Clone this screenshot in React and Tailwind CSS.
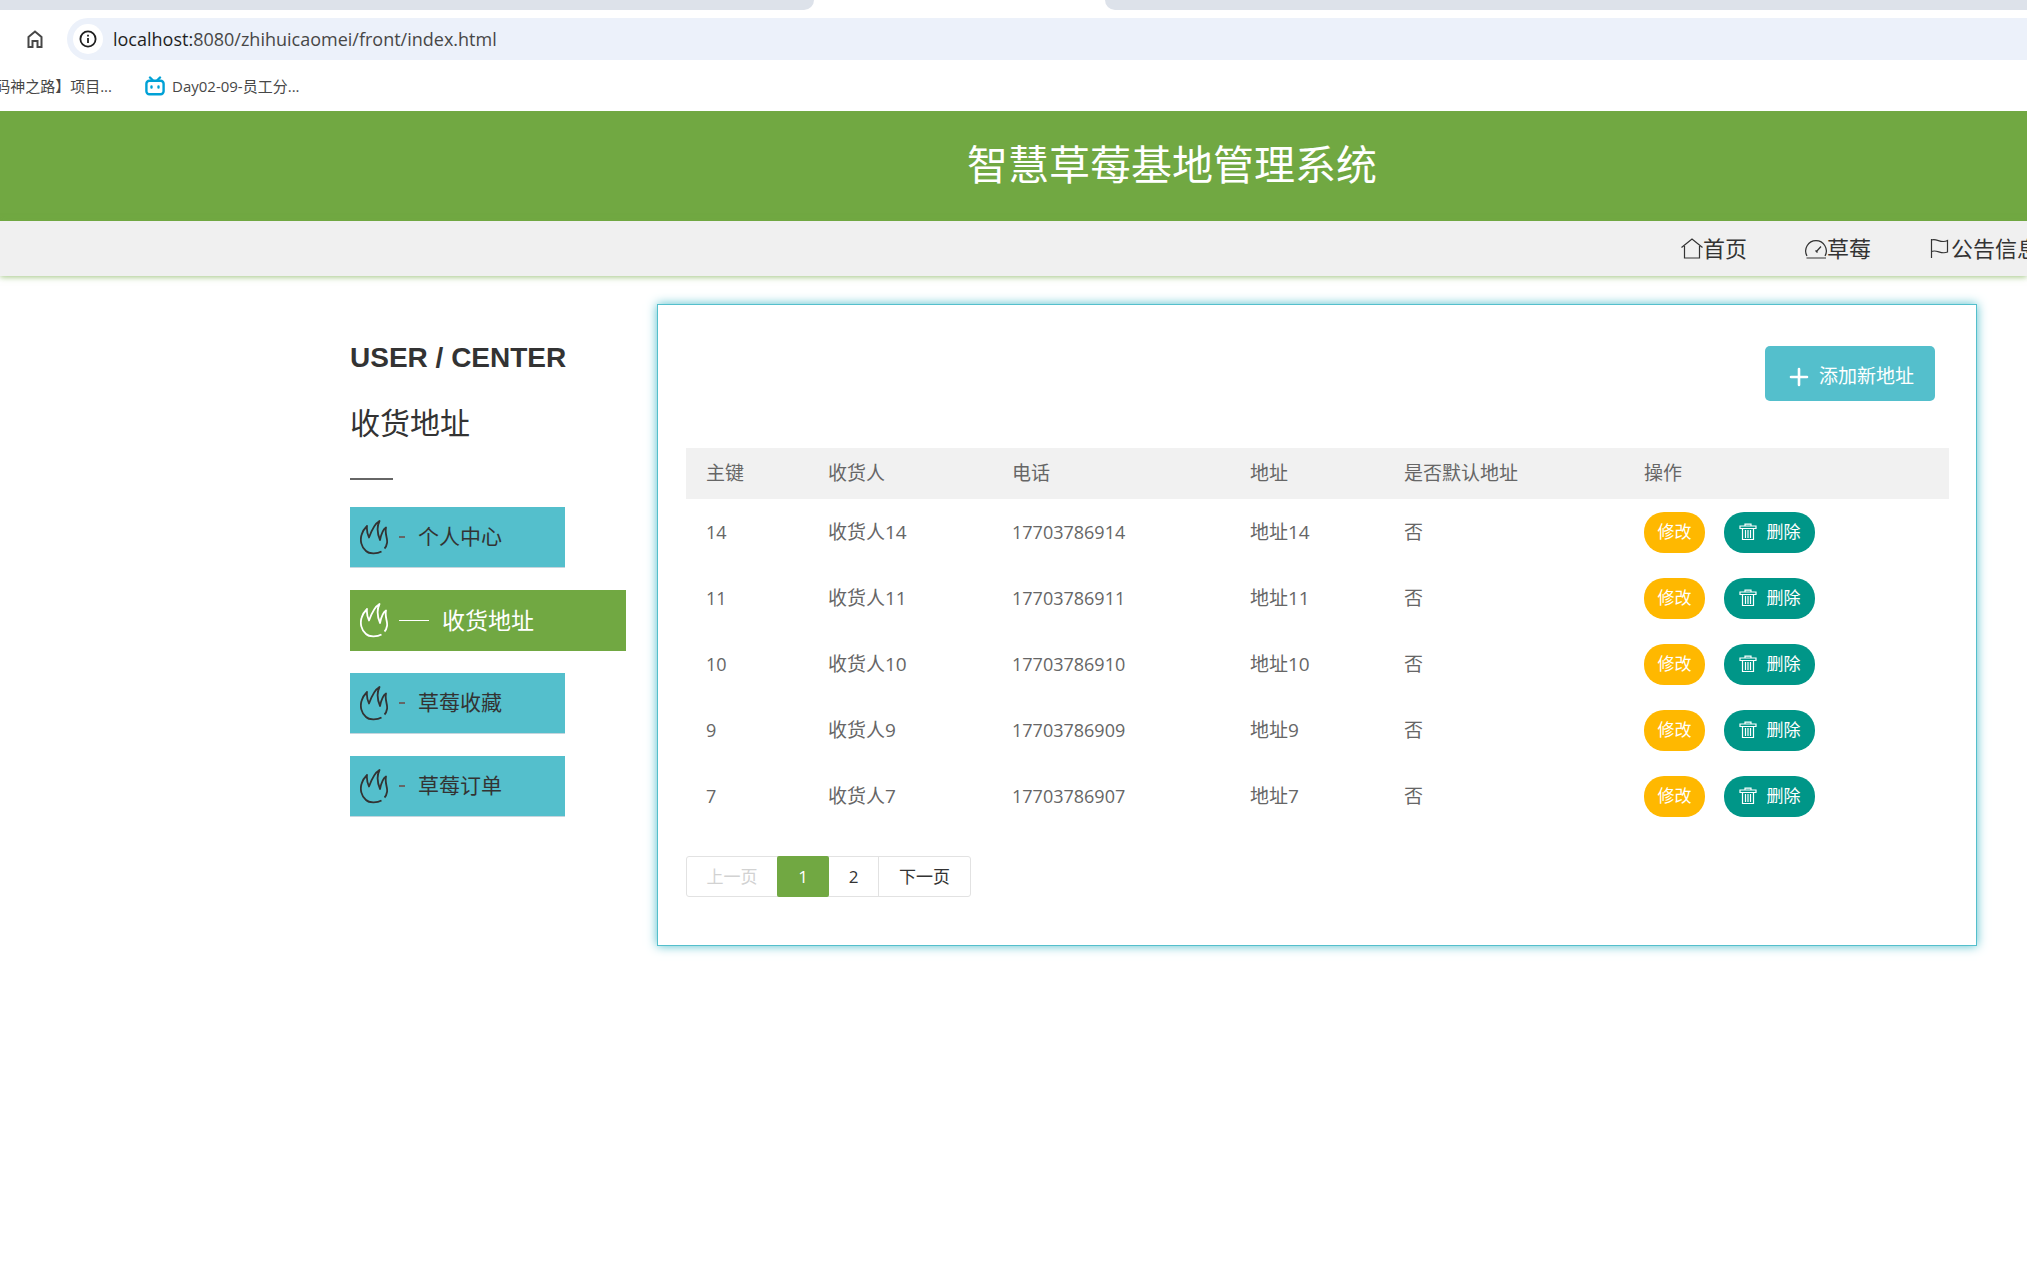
const navItems = [
  { label: "首页", icon: "home" },
  { label: "草莓", icon: "gauge" },
  { label: "公告信息", icon: "flag" },
];

const menuItems = [
  { label: "个人中心" },
  { label: "收货地址", active: true },
  { label: "草莓收藏" },
  { label: "草莓订单" },
];

const addresses = [
  { id: 14, name: "收货人14", phone: "17703786914", address: "地址14", isDefault: "否" },
  { id: 11, name: "收货人11", phone: "17703786911", address: "地址11", isDefault: "否" },
  { id: 10, name: "收货人10", phone: "17703786910", address: "地址10", isDefault: "否" },
  { id: 9, name: "收货人9", phone: "17703786909", address: "地址9", isDefault: "否" },
  { id: 7, name: "收货人7", phone: "17703786907", address: "地址7", isDefault: "否" },
];

const navPaths = {
  home: "M0.5 9.5 L11 1 L21.5 9.5 M3.5 8 V20 H18.5 V8",
  gauge: "M2 18 A10.3 10.3 0 1 1 20 18 M1.5 20 H21 M11 14 L16 8.5 M10.5 12.5 L12.500 14.5",
  flag: "M2.5 1 V20 M2.5 2 C8 0 12 6 18.5 2.500 V14 C12 17 8 11 2.5 13.500",
};

function NavIcon({ name }) {
  return (
    <svg viewBox="0 0 22 22" className="w-[22px] h-[22px]" fill="none" stroke="currentColor" strokeWidth="1.2">
      <path d={navPaths[name]} />
    </svg>
  );
}

function FireIcon() {
  return (
    <svg viewBox="0 0 28 35" className="w-7 h-[35px]" fill="none" stroke="currentColor" strokeWidth="1.8" strokeLinejoin="round">
      <path d="M21.5 31.5 C17 34 9 34 6 31 C1 27 0 20 1.5 15 C2.5 11 5 8 7 6 C6.5 10 7.5 14 9 17.5 C11 12 14 4 19.5 1 C16.5 7 17.5 14 20 20 C21 15 22 10 26 7.5 C24.5 14 28 19 27 23 C26.5 26 26 27 24.5 28.5" />
    </svg>
  );
}

function TrashIcon() {
  return (
    <svg viewBox="0 0 18 18" className="w-[18px] h-[18px]" fill="none" stroke="currentColor" strokeWidth="1.2">
      <path d="M1 5.5 V3 H17 V5.5 Z M6 3 V1.2 H12 V3 M3.5 5.5 V16.5 H14.5 V5.5 M6.5 7 V15 M9 7 V15 M11.5 7 V15" />
    </svg>
  );
}

function BrowserBar() {
  return (
    <div className="bg-white">
      {/* Tab strip */}
      <div className="flex h-[10px]">
        <div className="w-[814px] bg-[#dde2ea] rounded-br-[10px]" />
        <div className="w-[291px]" />
        <div className="flex-1 bg-[#dde2ea] rounded-bl-[10px]" />
      </div>

      {/* Address bar */}
      <div className="flex items-center pt-2 pl-[25px]">
        <button aria-label="主页" className="w-[42px] text-[#474747]">
          <svg viewBox="0 0 20 20" className="w-5 h-5" fill="none" stroke="currentColor" strokeWidth="2">
            <path d="M3.5 18 V8 L10 2.5 L16.5 8 V18 H12.5 V12 H7.5 V18 Z" />
          </svg>
        </button>
        <div className="flex flex-1 items-center h-[42px] pl-[6px] bg-[#ecf1fa] rounded-l-full text-[18px] text-[#474747]">
          <span className="flex items-center justify-center w-[30px] h-[30px] mr-[10px] rounded-full bg-white text-[#1f1f1f]">
            <svg viewBox="0 0 18 18" className="w-[18px] h-[18px]" fill="none" stroke="currentColor" strokeWidth="1.8">
              <circle cx="9" cy="9" r="7.6" />
              <path d="M9 8 V13 M9 4.8 V6.6" />
            </svg>
          </span>
          <span><span className="text-[#1f1f1f]">localhost:</span>8080/zhihuicaomei/front/index.html</span>
        </div>
      </div>

      {/* Bookmarks */}
      <div className="flex items-center h-[51px] pt-px overflow-hidden text-[15px] text-[#474747]">
        <a href="#" className="flex justify-end w-[112px] whitespace-nowrap">码神之路】项目...</a>
        <a href="#" className="flex items-center gap-[7px] ml-[33px] whitespace-nowrap">
          <svg viewBox="0 0 20 20" className="w-5 h-5" fill="none" stroke="#00a1d6" strokeWidth="2.4" strokeLinecap="round">
            <rect x="1.4" y="4.8" width="17.2" height="13.5" rx="3" />
            <path d="M5 1.5 L7.5 4 M15 1.5 L12.5 4 M6.5 10.5 V11.5 M13.5 10.5 V11.5" />
          </svg>
          Day02-09-员工分...
        </a>
      </div>
    </div>
  );
}

export default function App() {
  return (
    <div className="min-h-screen overflow-hidden bg-white font-['Open_Sans','Noto_Sans_CJK_SC',sans-serif]">
      <BrowserBar />

      <header className="h-[110px] pl-[317px] bg-[#71a842] text-center">
        <h1 className="text-[41px] leading-[106px] text-white">智慧草莓基地管理系统</h1>
      </header>

      <nav className="flex justify-end h-[55px] bg-[#f0f0f0] shadow-[0_1px_6px_#71a842aa]">
        <div className="flex items-center gap-[58px] w-[346px] overflow-hidden text-[22px] text-[#333]">
          {navItems.map((item) => (
            <a key={item.label} href="#" className="flex items-center shrink-0 whitespace-nowrap">
              <NavIcon name={item.icon} />
              {item.label}
            </a>
          ))}
        </div>
      </nav>

      <main className="flex items-start gap-[31px] pt-7 pl-[350px] pr-[50px]">
        {/* Sidebar */}
        <aside className="w-[276px] shrink-0 pt-[34px] text-[#333]">
          <h2 className="font-['Liberation_Sans',sans-serif] text-[28px] leading-10 font-bold">USER / CENTER</h2>
          <p className="mt-5 text-[30px] leading-[50px]">收货地址</p>
          <div className="w-[43px] h-[2px] mt-[30px] mb-[27px] bg-[#666]" />
          <ul className="flex flex-col gap-[22px]">
            {menuItems.map((item) => (
              <li key={item.label}>
                {item.active ? (
                  <a href="#" className="flex items-center w-[276px] h-[61px] pl-[10px] bg-[#71a842] text-[23px] text-white">
                    <FireIcon />
                    <span className="w-[30px] h-px ml-[11px] mr-[13px] bg-white" />
                    {item.label}
                  </a>
                ) : (
                  <a href="#" className="flex items-center w-[215px] h-[61px] pl-[10px] bg-[#54bfcc] border-b border-[#c5d5dd] text-[21px]">
                    <FireIcon />
                    <span className="w-[6px] h-[2px] ml-[11px] mr-[13px] bg-[#666]" />
                    {item.label}
                  </a>
                )}
              </li>
            ))}
          </ul>
        </aside>

        {/* Address list */}
        <section className="flex-1 pt-[41px] pl-7 pr-[27px] pb-12 border border-[#54bfcc] shadow-[0_0_10px_#54bfcc]">
          <div className="flex justify-end pr-[14px]">
            <button className="flex items-center gap-[10px] h-[55px] pl-6 pr-[21px] pt-[6px] rounded-[5px] bg-[#54bfcc] text-[19px] text-white">
              <svg viewBox="0 0 20 20" className="w-5 h-5" fill="none" stroke="currentColor" strokeWidth="2.6" strokeLinecap="round">
                <path d="M10 2 V18 M2 10 H18" />
              </svg>
              添加新地址
            </button>
          </div>

          <table className="w-full mt-[47px] table-fixed text-left text-[19px] text-[#666]">
            <colgroup>
              <col className="w-[122px]" />
              <col className="w-[184px]" />
              <col className="w-[238px]" />
              <col className="w-[154px]" />
              <col className="w-[240px]" />
              <col />
            </colgroup>
            <thead>
              <tr className="h-[51px] bg-[#f1f1f1]">
                {["主键", "收货人", "电话", "地址", "是否默认地址", "操作"].map((title) => (
                  <th key={title} className="px-5 font-normal">{title}</th>
                ))}
              </tr>
            </thead>
            <tbody>
              {addresses.map((row) => (
                <tr key={row.id} className="h-[66px]">
                  <td className="px-5 text-[18px]">{row.id}</td>
                  <td className="px-5">{row.name}</td>
                  <td className="px-5 text-[18px]">{row.phone}</td>
                  <td className="px-5">{row.address}</td>
                  <td className="px-5">{row.isDefault}</td>
                  <td className="px-5">
                    <div className="flex gap-[19px] text-[17px] text-white">
                      <button className="w-[61px] h-[41px] rounded-[20px] bg-[#ffb800]">修改</button>
                      <button className="flex items-center justify-center gap-[10px] w-[91px] h-[41px] rounded-[20px] bg-[#009688]">
                        <TrashIcon />
                        删除
                      </button>
                    </div>
                  </td>
                </tr>
              ))}
            </tbody>
          </table>

          {/* Pagination */}
          <div className="flex w-[285px] h-[41px] mt-[27px] border border-[#e2e2e2] rounded-[3px] text-[17px] text-[#333]">
            <button disabled className="w-[90px] text-[#d2d2d2]">上一页</button>
            <button className="w-[52px] h-[41px] -mt-px rounded-[2px] bg-[#71a842] text-white">1</button>
            <button className="w-[50px] border-r border-[#e2e2e2]">2</button>
            <button className="flex-1">下一页</button>
          </div>
        </section>
      </main>
    </div>
  );
}
